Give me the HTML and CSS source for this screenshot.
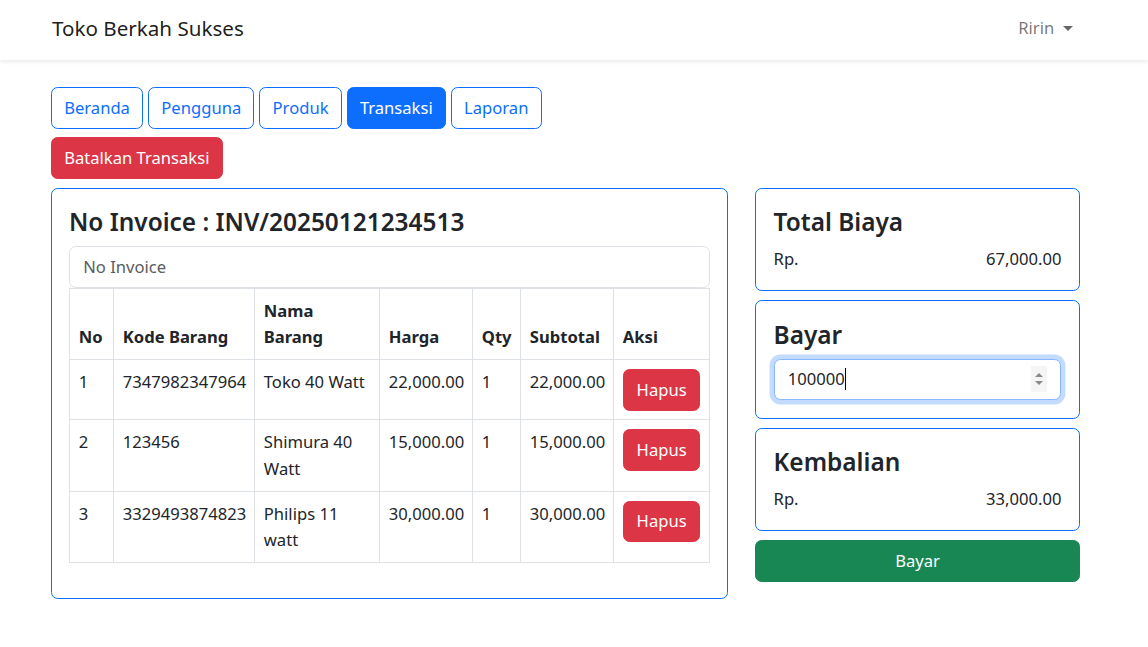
FILE: index.html
```html
<!DOCTYPE html>
<html lang="id">
<head>
<meta charset="utf-8">
<title>Transaksi - Toko Berkah Sukses</title>
<link rel="stylesheet" href="styles.css">
</head>
<body>
<nav class="navbar">
  <div class="nav-inner">
    <a class="brand" href="#">Toko Berkah Sukses</a>
    <a class="user" href="#">Ririn <span class="caret"></span></a>
  </div>
</nav>
<main class="page">
  <div class="menu">
    <a class="btn btn-outline" href="#">Beranda</a>
    <a class="btn btn-outline" href="#">Pengguna</a>
    <a class="btn btn-outline" href="#">Produk</a>
    <a class="btn btn-primary" href="#">Transaksi</a>
    <a class="btn btn-outline" href="#">Laporan</a>
  </div>
  <div class="actions">
    <a class="btn btn-danger" href="#">Batalkan Transaksi</a>
  </div>
  <div class="layout">
    <section class="card">
      <h4 class="card-title">No Invoice : INV/20250121234513</h4>
      <div class="form-control readonly">No Invoice</div>
      <table class="table">
        <colgroup>
          <col class="c-no"><col class="c-kode"><col class="c-nama"><col class="c-harga"><col class="c-qty"><col class="c-sub"><col class="c-aksi">
        </colgroup>
        <thead>
          <tr><th>No</th><th>Kode Barang</th><th>Nama Barang</th><th>Harga</th><th>Qty</th><th>Subtotal</th><th>Aksi</th></tr>
        </thead>
        <tbody>
          <tr><td>1</td><td>7347982347964</td><td>Toko 40 Watt</td><td>22,000.00</td><td>1</td><td>22,000.00</td><td><a class="btn btn-danger" href="#">Hapus</a></td></tr>
          <tr><td>2</td><td>123456</td><td>Shimura 40 Watt</td><td>15,000.00</td><td>1</td><td>15,000.00</td><td><a class="btn btn-danger" href="#">Hapus</a></td></tr>
          <tr><td>3</td><td>3329493874823</td><td>Philips 11 watt</td><td>30,000.00</td><td>1</td><td>30,000.00</td><td><a class="btn btn-danger" href="#">Hapus</a></td></tr>
        </tbody>
      </table>
    </section>
    <aside class="side">
      <div class="card mb">
        <h4 class="card-title">Total Biaya</h4>
        <div class="amount"><span>Rp.</span><span>67,000.00</span></div>
      </div>
      <div class="card mb">
        <h4 class="card-title">Bayar</h4>
        <div class="form-control focused">
          <span class="value">100000</span><span class="cursor"></span>
          <span class="spin"><span class="up"></span><span class="down"></span></span>
        </div>
      </div>
      <div class="card mb">
        <h4 class="card-title">Kembalian</h4>
        <div class="amount"><span>Rp.</span><span>33,000.00</span></div>
      </div>
      <a class="btn btn-success btn-block" href="#">Bayar</a>
    </aside>
  </div>
</main>
</body>
</html>
```

FILE: styles.css
```css
* { box-sizing: border-box; }
html, body { margin: 0; padding: 0; }
body {
  font-family: "Noto Sans", "Open Sans", sans-serif;
  font-size: 16.6px;
  line-height: 26.4px;
  color: #212529;
  background: #fff;
}
a { text-decoration: none; }

.navbar {
  height: 60px;
  background: #fff;
  box-shadow: 0 2px 4px rgba(0, 0, 0, 0.08);
}
.nav-inner {
  width: 1030px;
  margin-left: 52px;
  height: 100%;
  padding-bottom: 3px;
  display: flex;
  align-items: center;
  justify-content: space-between;
}
.brand {
  font-size: 20.6px;
  line-height: 33px;
  color: rgba(0, 0, 0, 0.9);
}
.user {
  display: flex;
  align-items: center;
  padding: 0 8.8px;
  color: rgba(0, 0, 0, 0.55);
}
.caret {
  width: 0;
  height: 0;
  margin-left: 9px;
  border-top: 5.3px solid rgba(0, 0, 0, 0.6);
  border-left: 5.3px solid transparent;
  border-right: 5.3px solid transparent;
}

.page {
  width: 1029px;
  margin: 27px 0 0 51px;
}
.menu {
  display: flex;
  gap: 5px;
}
.btn {
  display: inline-block;
  padding: 6.6px 12.2px;
  border: 1px solid transparent;
  border-radius: 6.6px;
  font-size: 16.6px;
  line-height: 26.4px;
  text-align: center;
  white-space: nowrap;
}
.btn-outline { color: #0d6efd; border-color: #0d6efd; background: #fff; }
.btn-primary { color: #fff; background: #0d6efd; border-color: #0d6efd; }
.btn-danger { color: #fff; background: #dc3545; border-color: #dc3545; }
.btn-success { color: #fff; background: #198754; border-color: #198754; }
.btn-block { display: block; width: 100%; }
.table td .btn { padding: 6.6px 12.8px; }

.actions { margin: 8.8px 0; }

.layout {
  display: grid;
  grid-template-columns: 677px 325px;
  column-gap: 27px;
  align-items: start;
}
.card {
  border: 1px solid #0d6efd;
  border-radius: 6.6px;
  padding: 17.6px;
  background: #fff;
}
.layout > .card { padding: 17.6px 17px; }
.card.mb { margin-bottom: 9px; }
.card-title {
  margin: 0 0 8.8px;
  font-size: 24.4px;
  line-height: 31px;
  font-weight: 600;
}

.form-control {
  height: 41.6px;
  padding: 6.6px 13.2px;
  border: 1px solid #dee2e6;
  border-radius: 6.6px;
  background: #fff;
}
.readonly { color: #595c5f; }
.focused {
  display: flex;
  align-items: center;
  border-color: #86b7fe;
  box-shadow: 0 0 0 4.4px rgba(13, 110, 253, 0.25);
  color: #212529;
}
.cursor {
  width: 1px;
  height: 22px;
  background: #000;
}
.spin {
  margin-left: auto;
  width: 16px;
  height: 26px;
  background: #f5f5f5;
  display: flex;
  flex-direction: column;
  align-items: center;
  justify-content: center;
  gap: 4px;
}
.spin .up, .spin .down {
  width: 0;
  height: 0;
  border-left: 4px solid transparent;
  border-right: 4px solid transparent;
}
.spin .up { border-bottom: 4px solid #8a8a8a; }
.spin .down { border-top: 4px solid #8a8a8a; }

.table {
  width: 100%;
  table-layout: fixed;
  border-collapse: collapse;
  margin-bottom: 17.6px;
}
.c-no { width: 44px; }
.c-kode { width: 141px; }
.c-nama { width: 125px; }
.c-harga { width: 93px; }
.c-qty { width: 48px; }
.c-sub { width: 93px; }
.c-aksi { width: 96px; }
.table th, .table td {
  border: 1px solid #dee2e6;
  padding: 8.8px;
  text-align: left;
  vertical-align: top;
}
.table thead th {
  vertical-align: bottom;
  font-weight: 700;
}

.amount {
  display: flex;
  justify-content: space-between;
}
```
